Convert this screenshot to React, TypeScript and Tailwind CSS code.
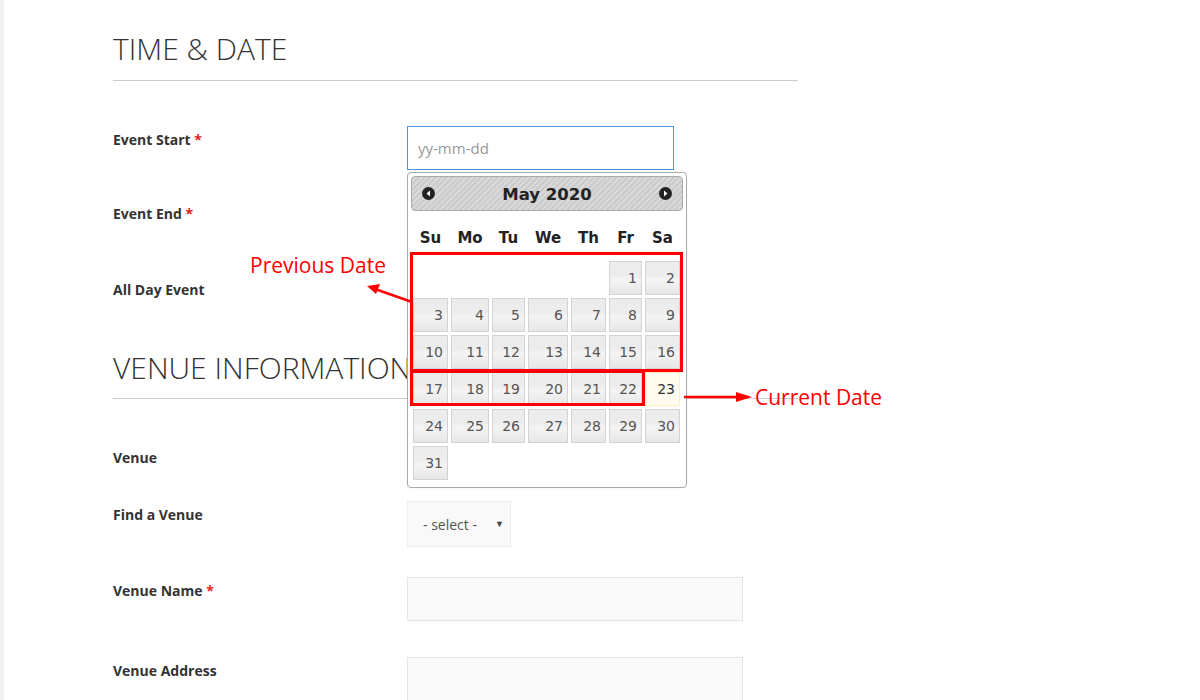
import * as React from 'react';

// column widths of the datepicker table (Su..Sa)
const cols = 'grid grid-cols-[35px_38px_33px_40px_35px_33px_35px] gap-x-[3px]';
const dayNames = ['Su', 'Mo', 'Tu', 'We', 'Th', 'Fr', 'Sa'];
const TODAY = 23;

function Datepicker() {
  const cells: (number | null)[] = [];
  for (let i = 0; i < 5; i++) cells.push(null);
  for (let d = 1; d <= 31; d++) cells.push(d);

  return (
    <div className="absolute left-0 top-[46px] z-10 w-[280px] rounded-[4px] border border-[#aaaaaa] bg-white p-[3px] pb-[7px] font-['DejaVu_Sans',sans-serif] shadow-[0_0_2px_rgba(0,0,0,0.08)]">
      <div className="flex h-[35px] items-center justify-between rounded-[4px] border border-[#aaaaaa] bg-[repeating-linear-gradient(135deg,#cbcbcb_0px,#cbcbcb_2px,#d9d9d9_2px,#d9d9d9_4px)] px-[10px]">
        <span className="flex h-[13px] w-[13px] items-center justify-center rounded-full bg-[#222]">
          <svg width="7" height="7" viewBox="0 0 7 7">
            <path d="M5 0.5 L1.5 3.5 L5 6.5 Z" fill="#fff" />
          </svg>
        </span>
        <span className="mt-[3px] text-[16.5px] font-bold text-[#222]">May 2020</span>
        <span className="flex h-[13px] w-[13px] items-center justify-center rounded-full bg-[#222]">
          <svg width="7" height="7" viewBox="0 0 7 7">
            <path d="M2 0.5 L5.5 3.5 L2 6.5 Z" fill="#fff" />
          </svg>
        </span>
      </div>
      <div className={`${cols} h-[50px] items-center px-[2px] pt-[4px]`}>
        {dayNames.map((n) => (
          <span key={n} className="text-center text-[15px] font-bold text-[#222]">
            {n}
          </span>
        ))}
      </div>
      <div className={`${cols} gap-y-[3px] px-[2px]`}>
        {cells.map((d, i) =>
          d === null ? (
            <span key={i} className="h-[34px]" />
          ) : d === TODAY ? (
            <span
              key={i}
              className="flex h-[34px] items-center justify-end border border-[#faefc3] bg-[#fffbee] pr-[4px] text-[14px] text-[#333]"
            >
              {d}
            </span>
          ) : (
            <span
              key={i}
              className="flex h-[34px] items-center justify-end border border-[#d3d3d3] bg-[linear-gradient(#ececec,#ececec_40%,#f4f4f4_55%,#e6e6e6)] pr-[4px] text-[14px] text-[#555]"
            >
              {d}
            </span>
          )
        )}
      </div>
    </div>
  );
}

function Label({ text, required }: { text: string; required?: boolean }) {
  return (
    <div className="w-[294px] shrink-0 pt-[4px] text-[14px] leading-[20px] font-bold text-[#333]">
      {text}
      {required && <span className="text-[#e2231a]"> *</span>}
    </div>
  );
}

function Arrow({ className, left }: { className: string; left?: boolean }) {
  return left ? (
    <svg className={className} width="46" height="20" viewBox="0 0 46 20">
      <line x1="45" y1="18" x2="8" y2="5" stroke="#ff0000" strokeWidth="2.5" />
      <path d="M0 2 L13 0 L9 10 Z" fill="#ff0000" />
    </svg>
  ) : (
    <svg className={className} width="68" height="12" viewBox="0 0 68 12">
      <line x1="0" y1="6" x2="56" y2="6" stroke="#ff0000" strokeWidth="2.5" />
      <path d="M68 6 L52 1 L52 11 Z" fill="#ff0000" />
    </svg>
  );
}

export default function App() {
  return (
    <div className="relative min-h-[700px] overflow-hidden border-l-4 border-[#f1f1f1] bg-white font-['Open_Sans',sans-serif]">
      <div className="w-[794px] pl-[109px] pt-[32px]">
        <h2 className="border-b border-[#cccccc] pb-[14px] text-[30px] leading-[34px] font-light text-[#333]">
          TIME &amp; DATE
        </h2>

        <div className="mt-[45px] flex">
          <Label text="Event Start" required />
          <div className="relative">
            <input
              placeholder="yy-mm-dd"
              className="h-[44px] w-[267px] border border-[#4f94e0] bg-white px-[10px] text-[15px] text-[#555] outline-none placeholder:text-[#999]"
            />
            <Datepicker />
          </div>
        </div>

        <div className="mt-[30px] flex h-[44px]">
          <Label text="Event End" required />
          <input className="h-[44px] w-[267px] border border-[#e5e5e5] bg-[#f9f9f9]" />
        </div>

        <div className="mt-[32px] flex h-[26px]">
          <Label text="All Day Event" />
        </div>

        <h2 className="mt-[49px] border-b border-[#cccccc] pb-[13px] text-[30px] leading-[34px] font-light whitespace-nowrap text-[#333]">
          VENUE INFORMATION
        </h2>

        <div className="mt-[45px] flex h-[26px]">
          <Label text="Venue" />
        </div>

        <div className="mt-[31px] flex">
          <Label text="Find a Venue" />
          <div className="flex h-[46px] w-[104px] items-center justify-between border border-[#eeeeee] bg-[#f9f9f9] pr-[6px] pl-[15px] text-[14px] text-[#555]">
            <span>- select -</span>
            <span className="text-[9px] text-[#444]">▼</span>
          </div>
        </div>

        <div className="mt-[30px] flex">
          <Label text="Venue Name" required />
          <input className="h-[44px] w-[336px] border border-[#e5e5e5] bg-[#f9f9f9]" />
        </div>

        <div className="mt-[36px] flex">
          <Label text="Venue Address" />
          <input className="h-[44px] w-[336px] border border-[#e5e5e5] bg-[#f9f9f9]" />
        </div>
      </div>

      {/* annotations */}
      <div className="absolute top-[252px] left-[406px] z-20 h-[120px] w-[273px] border-[3px] border-[#ff0000]" />
      <div className="absolute top-[370px] left-[406px] z-20 h-[36px] w-[235px] border-[3px] border-[#ff0000]" />
      <Arrow left className="absolute top-[284px] left-[363px] z-20" />
      <Arrow className="absolute top-[391px] left-[680px] z-20" />
      <span className="absolute top-[251px] left-[246px] z-20 text-[21px] leading-[28px] text-[#ff0000]">
        Previous Date
      </span>
      <span className="absolute top-[383px] left-[751px] z-20 text-[21px] leading-[28px] text-[#ff0000]">
        Current Date
      </span>
    </div>
  );
}
